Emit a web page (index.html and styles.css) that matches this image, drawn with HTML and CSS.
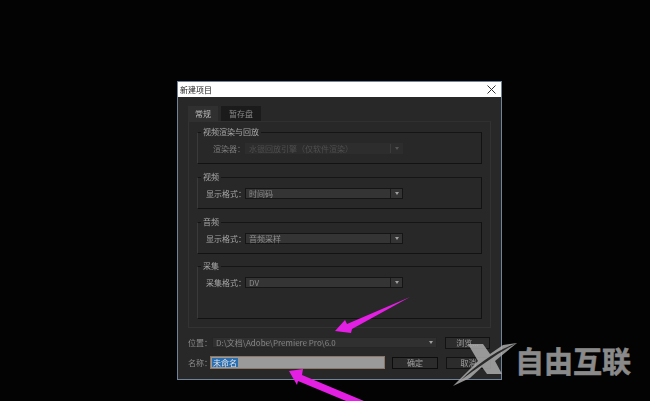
FILE: index.html
```html
<!DOCTYPE html>
<html lang="zh-CN">
<head>
    <meta charset="UTF-8">
    <meta name="viewport" content="width=device-width, initial-scale=1.0">
    <title>新建项目</title>
    <link rel="stylesheet" href="styles.css">
</head>
<body>
    <div class="dialog">
        <div class="titlebar">
            <span>新建项目</span>
            <svg class="close" width="9" height="9" viewBox="0 0 9 9"><path d="M.5.5l8 8M8.500.5l-8 8" stroke="#333" fill="none"/></svg>
        </div>
        <div class="content">
            <div class="tabs">
                <div class="tab active">常规</div>
                <div class="tab">暂存盘</div>
            </div>
            <div class="panel">
                <div class="group">
                    <div class="group-title">视频渲染与回放</div>
                    <div class="row">
                        <label class="disabled-label">渲染器：</label>
                        <div class="select disabled"><span>水银回放引擎（仅软件渲染）</span><i class="arrow-box"></i></div>
                    </div>
                </div>
                <div class="group">
                    <div class="group-title">视频</div>
                    <div class="row">
                        <label>显示格式：</label>
                        <div class="select"><span>时间码</span><i class="arrow-box"></i></div>
                    </div>
                </div>
                <div class="group">
                    <div class="group-title">音频</div>
                    <div class="row">
                        <label>显示格式：</label>
                        <div class="select"><span>音频采样</span><i class="arrow-box"></i></div>
                    </div>
                </div>
                <div class="group tall">
                    <div class="group-title">采集</div>
                    <div class="row">
                        <label>采集格式：</label>
                        <div class="select"><span>DV</span><i class="arrow-box"></i></div>
                    </div>
                </div>
            </div>
            <div class="bottom-row">
                <label>位置：</label>
                <div class="select path"><span>D:\文档\Adobe\Premiere Pro\6.0</span><i class="arrow-box plain"></i></div>
                <button class="btn">浏览...</button>
            </div>
            <div class="bottom-row name-row">
                <label>名称：</label>
                <div class="name-input"><span class="selected">未命名</span></div>
                <button class="btn ok">确定</button>
                <button class="btn">取消</button>
            </div>
        </div>
    </div>

    <!-- pink arrows + watermark sit on top of the screenshot -->
    <svg class="overlay" width="650" height="401" viewBox="0 0 650 401">
        <polygon points="335,331 345,320 347,324 410,297 352,329 351,333" fill="#e31fe3"/>
        <polygon points="289,371 303,369 302,375 364,401 346,401 298,381 297,385" fill="#e31fe3"/>
        <polygon points="468,344 483,344 490,354 503,345 517,343 495,361 502,374 487,374 482,367 470,378 453,386 478,361" fill="#ababab" opacity=".85"/>
        <path d="M517,343 C497,350 477,364 461,380 C479,367 498,353 517,343Z" fill="#2a2a2a"/>
    </svg>
    <div class="brand">自由互联</div>
</body>
</html>
```

FILE: styles.css
```css
html, body {
    margin: 0;
    padding: 0;
    height: 401px;
    overflow: hidden;
    background-color: #030303;
    font-family: "Noto Sans CJK SC", "Liberation Sans", sans-serif;
    font-size: 8px;
    color: #b4b4b4;
}
.dialog {
    box-sizing: border-box;
    width: 325px;
    height: 299px;
    margin: 81px 0 0 177px;
    display: flex;
    flex-direction: column;
    border: 1px solid #71839a;
    background-color: #282828;
    filter: blur(.35px);
}
.titlebar {
    height: 15px;
    flex: none;
    display: flex;
    align-items: center;
    justify-content: space-between;
    padding: 0 5px 0 2px;
    background-color: #fff;
    color: #222;
}
.content {
    padding: 9px 10px 0;
}
.tabs {
    display: flex;
    height: 15px;
}
.tab {
    padding: 0 8px;
    line-height: 15px;
    background-color: #1b1b1b;
    color: #8a8a8a;
    margin-left: 3px;
}
.tab.active {
    margin-left: 0;
    padding: 0 7px;
    width: 16px;
    background-color: #303030;
    color: #bdbdbd;
}
.panel {
    box-sizing: border-box;
    height: 207px;
    padding: 10px 8px 0;
    border: 1px solid #333;
    border-top-color: #303030;
    display: flex;
    flex-direction: column;
    gap: 13px;
}
.group {
    box-sizing: border-box;
    height: 32px;
    flex: none;
    border: 1px solid #121212;
    border-top-color: #151515;
    border-left-color: #3a3a3a;
    padding-left: 8px;
}
.group.tall {
    height: 53px;
    margin-top: -1px;
}
.group-title {
    width: fit-content;
    height: 10px;
    line-height: 10px;
    margin: -6px 0 0 -5px;
    padding: 0 2px;
    background-color: #282828;
    color: #a8a8a8;
}
.row {
    display: flex;
    align-items: center;
    height: 12px;
    margin-top: 5px;
}
.row label {
    width: 39px;
    text-align: right;
    color: #a8a8a8;
    white-space: nowrap;
}
.row label.disabled-label {
    color: #7c7c7c;
}
.select {
    box-sizing: border-box;
    width: 158px;
    height: 11px;
    display: flex;
    justify-content: space-between;
    align-items: center;
    padding-left: 3px;
    background-color: #343434;
    border: 1px solid #151515;
    color: #8e8e8e;
    line-height: 9px;
    white-space: nowrap;
}
.select.disabled {
    background-color: #2d2d2d;
    border-color: #2d2d2d;
    color: #4f4f4f;
}
.arrow-box {
    width: 11px;
    height: 9px;
    flex: none;
    display: flex;
    align-items: center;
    justify-content: center;
    border-left: 1px solid #1a1a1a;
}
.arrow-box::after {
    content: "";
    border-left: 2.500px solid transparent;
    border-right: 2.500px solid transparent;
    border-top: 3px solid #a0a0a0;
}
.select.disabled .arrow-box {
    border-left-color: #3c3c3c;
}
.select.disabled .arrow-box::after {
    border-top-color: #555;
}
.arrow-box.plain {
    border-left: none;
}
.bottom-row {
    display: flex;
    align-items: center;
    height: 11px;
    margin-top: 9px;
}
.bottom-row label {
    width: 24px;
    color: #8c8c8c;
    white-space: nowrap;
    flex: none;
}
.select.path {
    width: 225px;
    background-color: #303030;
    border-color: #262626;
    color: #868686;
}
.btn {
    box-sizing: border-box;
    width: 45px;
    height: 12px;
    margin-left: 8px;
    padding: 0;
    font: inherit;
    line-height: 10px;
    color: #a0a0a0;
    background-color: #2c2c2c;
    border: 1px solid #121212;
}
.name-row {
    height: 13px;
    margin-top: 8px;
}
.name-input {
    box-sizing: border-box;
    width: 175px;
    height: 13px;
    margin-left: -2px;
    padding: 1px 1px;
    background-color: #9a9a9a;
    border: 1px solid #8a7766;
    line-height: 9px;
}
.selected {
    display: inline-block;
    height: 9px;
    padding: 0 1px;
    background-color: #2b6fb3;
    color: #e4e4e4;
}
.btn.ok {
    margin-left: 7px;
    width: 46px;
    border-color: #0d0d0d;
}
.overlay {
    position: absolute;
    left: 0;
    top: 0;
}
.brand {
    position: absolute;
    left: 515px;
    top: 340px;
    font-size: 29px;
    line-height: 40px;
    font-weight: 700;
    color: #8a8a8a;
    -webkit-text-stroke: .6px #8a8a8a;
    white-space: nowrap;
}
```
